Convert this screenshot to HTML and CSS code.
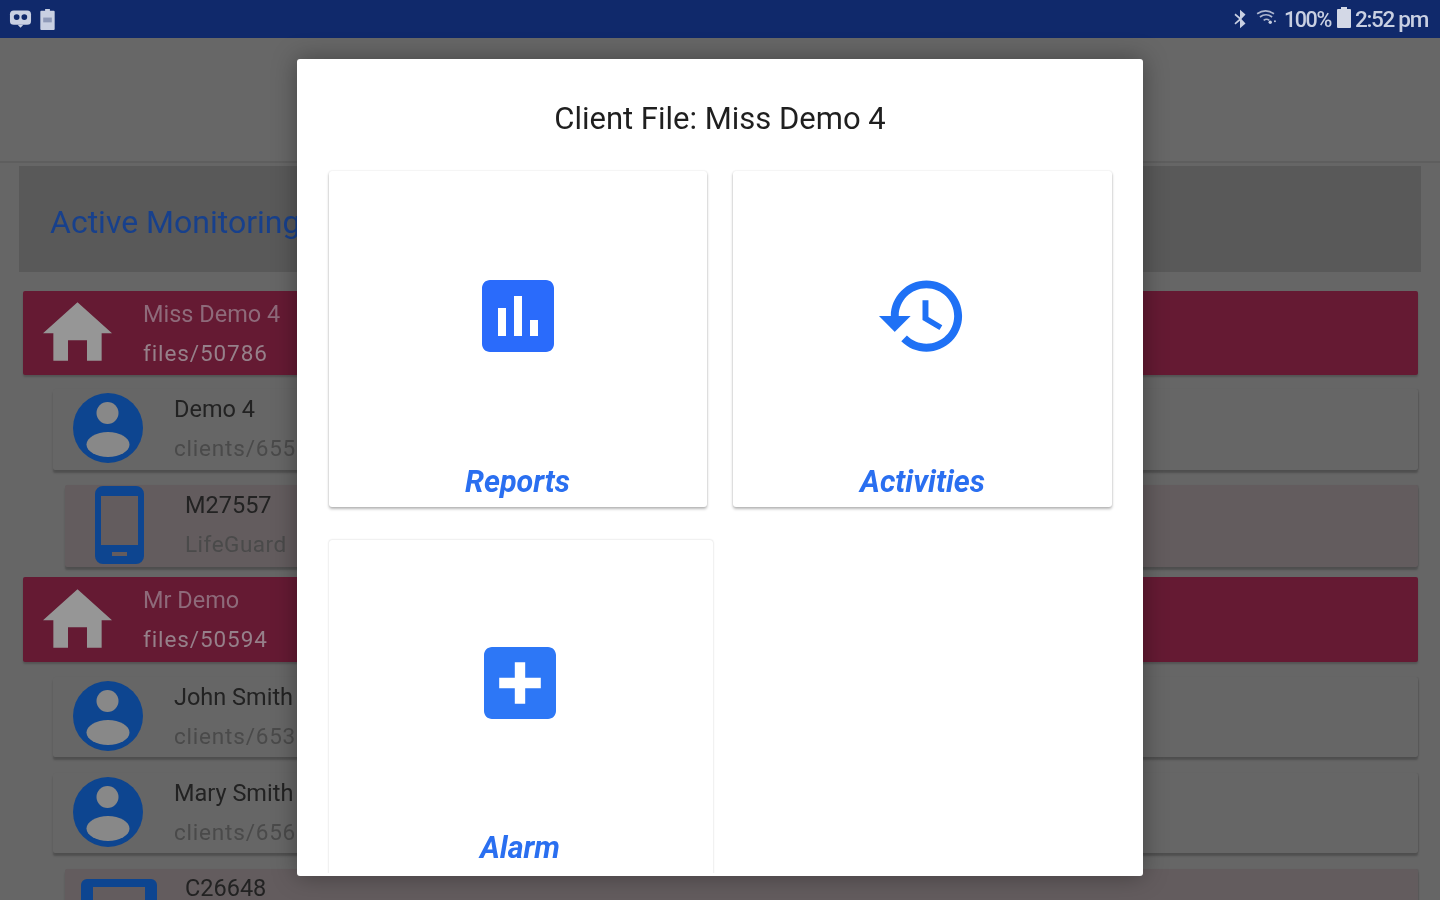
FILE: index.html
```html
<!DOCTYPE html>
<html lang="en">
<head>
<meta charset="utf-8">
<title>Client File</title>
<link rel="stylesheet" href="styles.css">
</head>
<body>
<div class="app">
  <header class="status">
    <div class="status-left">
      <svg class="st-robot" viewBox="0 0 24 20"><rect x="1" y="1" width="22" height="15" rx="4" fill="#c9d0e2"/><circle cx="8" cy="8" r="3" fill="#10296b"/><circle cx="16" cy="8" r="3" fill="#10296b"/><path d="M9 16h6l-3 3z" fill="#c9d0e2"/></svg>
      <svg class="st-clip" viewBox="0 0 15 23"><path d="M5 3V1h5v2h4a1 1 0 0 1 1 1v18a1 1 0 0 1-1 1H1a1 1 0 0 1-1-1V4a1 1 0 0 1 1-1z" fill="#c9d0e2"/><rect x="3" y="10" width="9" height="5" fill="#8f9ab8"/></svg>
    </div>
    <div class="status-right">
      <svg class="st-bt" viewBox="0 0 16 24"><path d="M8 2l6 5-4.500 5 4.500 5-6 5v-8l-5 4-1-1.500L7 12 2 7.500 3 6l5 4z" fill="#c9d0e2"/></svg>
      <svg class="st-wifi" viewBox="0 0 22 16"><path d="M1 4c6-4 12-4 18 0M4 7.500c4-3 9-3 13 0M8 11c2-1.500 4-1.500 6 0" fill="none" stroke="#aeb7d0" stroke-width="1.800"/><circle cx="15" cy="13" r="1.800" fill="#c9d0e2"/><circle cx="20" cy="12" r="1" fill="#c9d0e2"/></svg>
      <span class="st-pct">100%</span>
      <svg class="st-batt" viewBox="0 0 14 21"><path d="M4 2V0h6v2h3a1 1 0 0 1 1 1v17a1 1 0 0 1-1 1H1a1 1 0 0 1-1-1V3a1 1 0 0 1 1-1z" fill="#d3d8e6"/></svg>
      <span class="st-time">2:52 pm</span>
    </div>
  </header>
  <div class="appbar"></div>
  <main class="content">
    <section class="panel"><h1 class="panel-title">Active Monitoring</h1></section>

    <article class="bar bar-first">
      <svg class="home" viewBox="2 3 20 17"><path d="M9.250 20v-6h5.500v6H19v-8h3L12 3 2 12h3v8z"/></svg>
      <div class="txt"><div class="name">Miss Demo 4</div><div class="sub">files/50786</div></div>
    </article>
    <article class="row row-a">
      <svg class="person" viewBox="0 0 70 70"><circle cx="35" cy="35" r="35"/><circle class="cut" cx="34.500" cy="20" r="11"/><ellipse class="cut" cx="35" cy="51.500" rx="21.500" ry="12.500"/></svg>
      <div class="txt"><div class="name">Demo 4</div><div class="sub">clients/655</div></div>
    </article>
    <article class="row device row-b">
      <svg class="phone" viewBox="0 0 49 78"><path fill-rule="evenodd" d="M8 0h33a8 8 0 0 1 8 8v62a8 8 0 0 1-8 8H8a8 8 0 0 1-8-8V8a8 8 0 0 1 8-8zM6 10v49h37V10zM17 66v4h15v-4z"/></svg>
      <div class="txt"><div class="name">M27557</div><div class="sub sub-tight">LifeGuard</div></div>
    </article>

    <article class="bar bar-second">
      <svg class="home" viewBox="2 3 20 17"><path d="M9.250 20v-6h5.500v6H19v-8h3L12 3 2 12h3v8z"/></svg>
      <div class="txt"><div class="name">Mr Demo</div><div class="sub">files/50594</div></div>
    </article>
    <article class="row row-c">
      <svg class="person" viewBox="0 0 70 70"><circle cx="35" cy="35" r="35"/><circle class="cut" cx="34.500" cy="20" r="11"/><ellipse class="cut" cx="35" cy="51.500" rx="21.500" ry="12.500"/></svg>
      <div class="txt"><div class="name">John Smith</div><div class="sub">clients/653</div></div>
    </article>
    <article class="row row-d">
      <svg class="person" viewBox="0 0 70 70"><circle cx="35" cy="35" r="35"/><circle class="cut" cx="34.500" cy="20" r="11"/><ellipse class="cut" cx="35" cy="51.500" rx="21.500" ry="12.500"/></svg>
      <div class="txt"><div class="name">Mary Smith</div><div class="sub">clients/656</div></div>
    </article>
    <article class="row device row-e">
      <svg class="tablet" viewBox="0 0 76 60"><path fill-rule="evenodd" d="M6 0h64a6 6 0 0 1 6 6v48a6 6 0 0 1-6 6H6a6 6 0 0 1-6-6V6a6 6 0 0 1 6-6zM12 8v44h52V8z"/></svg>
      <div class="txt"><div class="name">C26648</div></div>
    </article>
  </main>
</div>

<div class="modal">
  <h2 class="modal-title">Client File: Miss Demo 4</h2>
  <div class="tiles">
    <a class="tile tile-reports">
      <svg class="tile-icon" viewBox="0 0 24 24"><path d="M19 3H5c-1.100 0-2 .9-2 2v14c0 1.100.9 2 2 2h14c1.100 0 2-.9 2-2V5c0-1.100-.9-2-2-2zM9 17H7v-7h2v7zm4 0h-2V7h2v10zm4 0h-2v-4h2v4z"/></svg>
      <span class="tile-label">Reports</span>
    </a>
    <a class="tile tile-activities">
      <svg class="tile-icon" viewBox="0 0 24 24"><path d="M13 3c-4.970 0-9 4.030-9 9H1l3.890 3.890.07.14L9 12H6c0-3.870 3.130-7 7-7s7 3.130 7 7-3.130 7-7 7c-1.930 0-3.680-.79-4.940-2.060l-1.420 1.420C8.270 19.990 10.510 21 13 21c4.970 0 9-4.030 9-9s-4.030-9-9-9zm-1 5v5l4.280 2.540.72-1.210-3.500-2.080V8H12z"/></svg>
      <span class="tile-label">Activities</span>
    </a>
    <a class="tile tile-alarm">
      <svg class="tile-icon" viewBox="0 0 24 24"><path d="M19 3H5c-1.110 0-2 .9-2 2v14c0 1.100.89 2 2 2h14c1.100 0 2-.9 2-2V5c0-1.100-.9-2-2-2zm-1.800 10.300h-3.900v3.900h-2.600v-3.900H6.800v-2.600h3.900V6.800h2.600v3.900h3.900v2.600z"/></svg>
      <span class="tile-label">Alarm</span>
    </a>
  </div>
</div>
</body>
</html>
```
FILE: styles.css
```css
* { box-sizing: border-box; }
html, body { margin: 0; height: 100%; overflow: hidden; background: #666; }
body { font-family: Roboto, "Liberation Sans", sans-serif; }

.app { height: 900px; overflow: hidden; background: #666; filter: blur(0.7px); }

.status { height: 38px; background: #10296b; display: flex; justify-content: space-between; align-items: center; padding: 0 12px 0 9px; color: #c9d0e2; }
.status-left { display: flex; align-items: center; gap: 8px; }
.st-robot { width: 23px; height: 20px; }
.st-clip { width: 15px; height: 22px; }
.status-right { display: flex; align-items: center; }
.st-bt { width: 16px; height: 22px; margin-right: 8px; }
.st-wifi { width: 21px; height: 15px; margin-right: 7px; margin-top: -4px; }
.st-pct { font-size: 21.500px; font-weight: 500; letter-spacing: -1.400px; width: 47px; }
.st-batt { width: 14px; height: 21px; margin: -4px 4px 0 6px; }
.st-time { font-size: 22.500px; font-weight: 500; letter-spacing: -1.300px; }

.appbar { height: 125px; border-bottom: 2px solid #5e5e5e; background: #676767; }

.content { padding: 3px 22px 0 23px; }
.panel { margin: 0 -3px 19px -4px; height: 106px; background: #595959; display: flex; align-items: center; padding: 6px 0 0 31px; }
.panel-title { margin: 0; font-size: 32px; font-weight: 400; color: #17408c; white-space: nowrap; }

.bar, .row { display: flex; align-items: center; border-radius: 2px; box-shadow: 0 2px 2px rgba(0,0,0,.18); }
.bar { height: 84px; background: #651a33; padding-left: 20px; }
.bar-second { margin-top: 10px; height: 85px; }
.home { width: 69px; height: 59px; margin-top: -3px; fill: #969696; flex: none; }
.bar .txt { margin-left: 31px; padding-top: 1px; }
.bar .name { color: #8e6a7a; }
.bar .sub { color: #96808a; letter-spacing: 0.900px; }

.row { background: #666; margin-left: 30px; height: 81px; padding-left: 20px; box-shadow: 0 3px 2px rgba(0,0,0,.22), 1px 0 1px rgba(0,0,0,.08); }
.row-a { margin-top: 14px; }
.row-b { margin-top: 15px; height: 82px; }
.row-c { margin-top: 15px; height: 80px; }
.row-d { margin-top: 16px; height: 80px; }
.row-e { margin-top: 16px; height: 90px; align-items: flex-start; }
.device { background: #635c5e; margin-left: 42px; padding-left: 30px; }
.person { width: 70px; height: 70px; margin-top: -3px; fill: #0d4590; flex: none; }
.person .cut { fill: #888; }
.phone { width: 49px; height: 78px; margin-top: -2px; fill: #0d4590; flex: none; }
.tablet { width: 76px; height: 60px; fill: #0d4590; flex: none; margin: 10px 0 0 -14px; }
.row .txt { margin-left: 31px; margin-top: -1px; }
.row.device .txt { margin-left: 41px; margin-top: -2px; }
.row-e .txt { margin-left: 28px !important; margin-top: 0 !important; }
.name { font-size: 23.500px; line-height: 38px; color: #222; white-space: nowrap; }
.sub { font-size: 22.500px; line-height: 40px; color: #4a4a4a; letter-spacing: 0.800px; white-space: nowrap; }
.sub-tight { letter-spacing: 0.500px; }

.modal { position: absolute; left: 297px; top: 59px; width: 846px; height: 817px; background: #fff; border-radius: 3px; box-shadow: 0 0 24px rgba(0,0,0,.35); display: flex; flex-direction: column; padding-bottom: 3px; filter: blur(0.5px); }
.modal-title { margin: 0; height: 108px; padding-top: 39px; text-align: center; font-size: 31px; line-height: 42px; font-weight: 400; color: #1f1f1f; flex: none; }
.tiles { flex: 1; min-height: 0; overflow: hidden; display: flex; flex-wrap: wrap; align-content: flex-start; column-gap: 26px; row-gap: 33px; padding: 4px 0 0 32px; }
.tile { display: flex; flex-direction: column; align-items: center; background: #fff; border-radius: 3px; padding-top: 97px; box-shadow: 0 2px 3px rgba(0,0,0,.28), 0 0 2px rgba(0,0,0,.12); height: 336px; }
.tile-reports { width: 378px; }
.tile-activities { width: 379px; }
.tile-alarm { width: 384px; padding-top: 95px; box-shadow: 0 0 2px rgba(0,0,0,.22); }
.tile-icon { width: 96px; height: 96px; fill: #2a6bfb; display: block; flex: none; }
.tile-reports .tile-icon { margin-left: -1px; }
.tile-activities .tile-icon { fill: #1f71f5; width: 95px; }
.tile-alarm .tile-icon { fill: #2d77f6; margin-left: -2px; }
.tile-label { margin-top: 99px; font-size: 30.500px; line-height: 38px; font-style: italic; font-weight: 700; color: #2a6ff0; }
.tile-reports .tile-label { margin-left: -1px; }
.tile-alarm .tile-label { margin: 98px 0 0 -2px; }
```
